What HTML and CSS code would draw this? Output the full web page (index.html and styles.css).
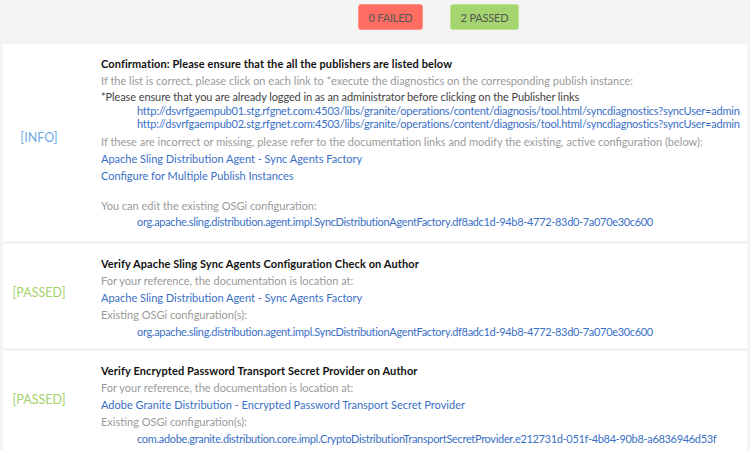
FILE: index.html
```html
<!DOCTYPE html>
<html>
<head>
<meta charset="utf-8">
<link rel="stylesheet" href="styles.css">
</head>
<body>
<div class="summary">
  <span class="badge failed">0 FAILED</span>
  <span class="badge passed">2 PASSED</span>
</div>
<div class="results">
  <div class="card first">
    <div class="status info">[INFO]</div>
    <div class="body">
      <div class="title">Confirmation: Please ensure that the all the publishers are listed below</div>
      <div class="muted">If the list is correct, please click on each link to *execute the diagnostics on the corresponding publish instance:</div>
      <div class="dark">*Please ensure that you are already logged in as an administrator before clicking on the Publisher links</div>
      <div class="urls">
        <a class="url" href="#">http://dsvrfgaempub01.stg.rfgnet.com:4503/libs/granite/operations/content/diagnosis/tool.html/syncdiagnostics?syncUser=admin</a>
        <a class="url" href="#">http://dsvrfgaempub02.stg.rfgnet.com:4503/libs/granite/operations/content/diagnosis/tool.html/syncdiagnostics?syncUser=admin</a>
      </div>
      <div class="muted">If these are incorrect or missing, please refer to the documentation links and modify the existing, active configuration (below):</div>
      <a class="doc" href="#">Apache Sling Distribution Agent - Sync Agents Factory</a>
      <a class="doc" href="#">Configure for Multiple Publish Instances</a>
      <div class="muted edit">You can edit the existing OSGi configuration:</div>
      <a class="cfg" href="#">org.apache.sling.distribution.agent.impl.SyncDistributionAgentFactory.df8adc1d-94b8-4772-83d0-7a070e30c600</a>
    </div>
  </div>
  <div class="card">
    <div class="status passed-text">[PASSED]</div>
    <div class="body">
      <div class="title">Verify Apache Sling Sync Agents Configuration Check on Author</div>
      <div class="muted">For your reference, the documentation is location at:</div>
      <a class="doc" href="#">Apache Sling Distribution Agent - Sync Agents Factory</a>
      <div class="muted">Existing OSGi configuration(s):</div>
      <a class="cfg" href="#">org.apache.sling.distribution.agent.impl.SyncDistributionAgentFactory.df8adc1d-94b8-4772-83d0-7a070e30c600</a>
    </div>
  </div>
  <div class="card">
    <div class="status passed-text">[PASSED]</div>
    <div class="body">
      <div class="title">Verify Encrypted Password Transport Secret Provider on Author</div>
      <div class="muted">For your reference, the documentation is location at:</div>
      <a class="doc" href="#">Adobe Granite Distribution - Encrypted Password Transport Secret Provider</a>
      <div class="muted">Existing OSGi configuration(s):</div>
      <a class="cfg" href="#">com.adobe.granite.distribution.core.impl.CryptoDistributionTransportSecretProvider.e212731d-051f-4b84-90b8-a6836946d53f</a>
    </div>
  </div>
</div>
</body>
</html>
```

FILE: styles.css
```css
html, body {
  margin: 0;
  padding: 0;
  background: #f4f4f4;
  font-family: Lato, "Open Sans", sans-serif;
  font-size: 11px;
  overflow: hidden;
}

.summary {
  display: flex;
  gap: 27px;
  padding: 4px 0 0 358px;
  height: 26px;
  margin-bottom: 14px;
}

.badge {
  display: flex;
  align-items: center;
  justify-content: center;
  height: 24px;
  border-radius: 3px;
  color: #555555;
  font-size: 11px;
  letter-spacing: -0.2px;
}

.badge.failed {
  width: 63px;
  background: #ff6d62;
  border: 1px solid #ff9188;
}

.badge.passed {
  width: 67px;
  background: #a4d56f;
  border: 1px solid #bde296;
}

.results {
  display: flex;
  flex-direction: column;
  gap: 3px;
  padding: 0 3px;
}

.card {
  display: flex;
  align-items: center;
  background: #ffffff;
  padding: 11px 0 8px 0;
}

.card.first {
  padding: 12px 0 12px 0;
}

.status {
  width: 72px;
  flex: none;
  text-align: center;
  font-size: 12.5px;
  padding-bottom: 10px;
}

.status.info { color: #6fabe6; }
.status.passed-text { color: #a3d26c; }

.body {
  margin-left: 26px;
  display: flex;
  flex-direction: column;
  align-items: flex-start;
  white-space: nowrap;
  line-height: 17px;
}

.title {
  font-weight: bold;
  color: #111;
  letter-spacing: 0.1px;
}

.first .title,
.first .muted:first-of-type { line-height: 16px; }

.muted { color: #9a9a9a; }
.dark { color: #444; line-height: 15px; letter-spacing: -0.1px; }

a {
  color: #3a6fc6;
  text-decoration: none;
}

.urls {
  display: flex;
  flex-direction: column;
  margin-left: 36px;
  margin-bottom: 3px;
}

.url {
  line-height: 13px;
  letter-spacing: -0.22px;
}

.edit { margin-top: 13px; }

.cfg {
  margin-left: 36px;
  letter-spacing: -0.32px;
}

.first .cfg { line-height: 15px; }
```
